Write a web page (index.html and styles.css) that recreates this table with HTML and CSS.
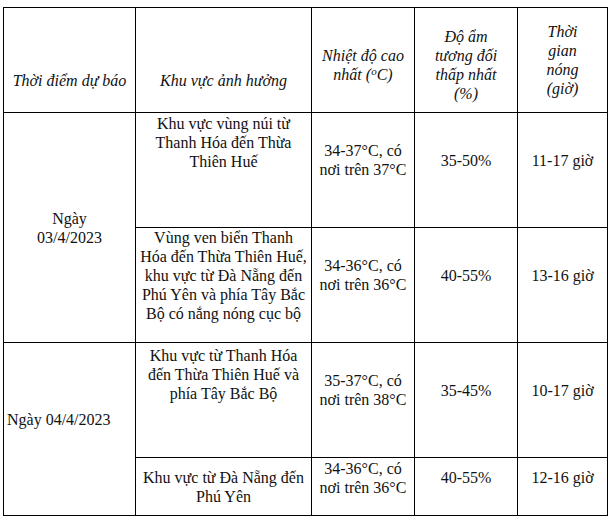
FILE: index.html
```html
<!DOCTYPE html>
<html lang="vi">
<head>
<meta charset="utf-8">
<title>Dự báo nắng nóng</title>
<link rel="stylesheet" href="styles.css">
</head>
<body>
<table class="forecast">
  <colgroup>
    <col class="w1"><col class="w2"><col class="w3"><col class="w4"><col class="w5">
  </colgroup>
  <tr class="row-head">
    <th class="h1">Thời điểm dự báo</th>
    <th class="h2">Khu vực ảnh hưởng</th>
    <th class="h3">Nhiệt độ cao<br>nhất (<sup>o</sup>C)</th>
    <th class="h4">Độ ẩm<br>tương đối<br>thấp nhất<br>(%)</th>
    <th class="h5">Thời<br>gian<br>nóng<br>(giờ)</th>
  </tr>
  <tr class="row-tall">
    <td class="day day-a" rowspan="2">Ngày<br>03/4/2023</td>
    <td class="area area-1">Khu vực vùng núi từ<br>Thanh Hóa đến Thừa<br>Thiên Huế</td>
    <td class="val">34-37°C, có<br>nơi trên 37°C</td>
    <td class="val">35-50%</td>
    <td class="val">11-17 giờ</td>
  </tr>
  <tr class="row-tall">
    <td class="area area-2">Vùng ven biển Thanh<br>Hóa đến Thừa Thiên Huế,<br>khu vực từ Đà Nẵng đến<br>Phú Yên và phía Tây Bắc<br>Bộ có nắng nóng cục bộ</td>
    <td class="val">34-36°C, có<br>nơi trên 36°C</td>
    <td class="val">40-55%</td>
    <td class="val">13-16 giờ</td>
  </tr>
  <tr class="row-tall">
    <td class="day day-b" rowspan="2">Ngày 04/4/2023</td>
    <td class="area area-3">Khu vực từ Thanh Hóa<br>đến Thừa Thiên Huế và<br>phía Tây Bắc Bộ</td>
    <td class="val">35-37°C, có<br>nơi trên 38°C</td>
    <td class="val">35-45%</td>
    <td class="val">10-17 giờ</td>
  </tr>
  <tr class="row-short">
    <td class="area area-4">Khu vực từ Đà Nẵng đến<br>Phú Yên</td>
    <td class="val">34-36°C, có<br>nơi trên 36°C</td>
    <td class="val">40-55%</td>
    <td class="val">12-16 giờ</td>
  </tr>
</table>
</body>
</html>
```

FILE: styles.css
```css
html, body {
  margin: 0;
  padding: 0;
  background: #ffffff;
}

body {
  font-family: "Liberation Serif", "Times New Roman", serif;
  font-size: 16px;
  line-height: 19px;
  color: #111111;
}

.forecast {
  margin: 7px 0 0 3px;
  border-collapse: collapse;
  table-layout: fixed;
  width: 604px;
}

.w1 { width: 132px; }
.w2 { width: 176px; }
.w3 { width: 103px; }
.w4 { width: 103px; }
.w5 { width: 90px; }

.forecast th,
.forecast td {
  border: 1px solid #000000;
  padding: 0;
  text-align: center;
  white-space: nowrap;
  vertical-align: top;
}

.forecast th {
  font-style: italic;
  font-weight: normal;
}

.forecast sup {
  font-size: 11px;
  line-height: 0;
  vertical-align: 5px;
}

.row-head { height: 105px; }
.row-tall { height: 115px; }
.row-short { height: 58px; }

.forecast .h1,
.forecast .h2 { padding-top: 63px; }
.forecast .h3 { padding-top: 38px; }
.forecast .h4 { padding-top: 19px; }
.forecast .h5 { padding-top: 14px; }

.forecast .day {
  vertical-align: middle;
}

.forecast .day-b {
  text-align: left;
  padding-left: 3px;
  padding-bottom: 20px;
}

.forecast .area-1 { padding-top: 1px; }
.forecast .area-2 { padding-top: 0; }
.forecast .area-3 { padding-top: 3px; }
.forecast .area-4 { vertical-align: middle; }

.forecast .val {
  vertical-align: middle;
  padding-bottom: 20px;
}

.forecast .row-short .val {
  padding-bottom: 18px;
}
```
